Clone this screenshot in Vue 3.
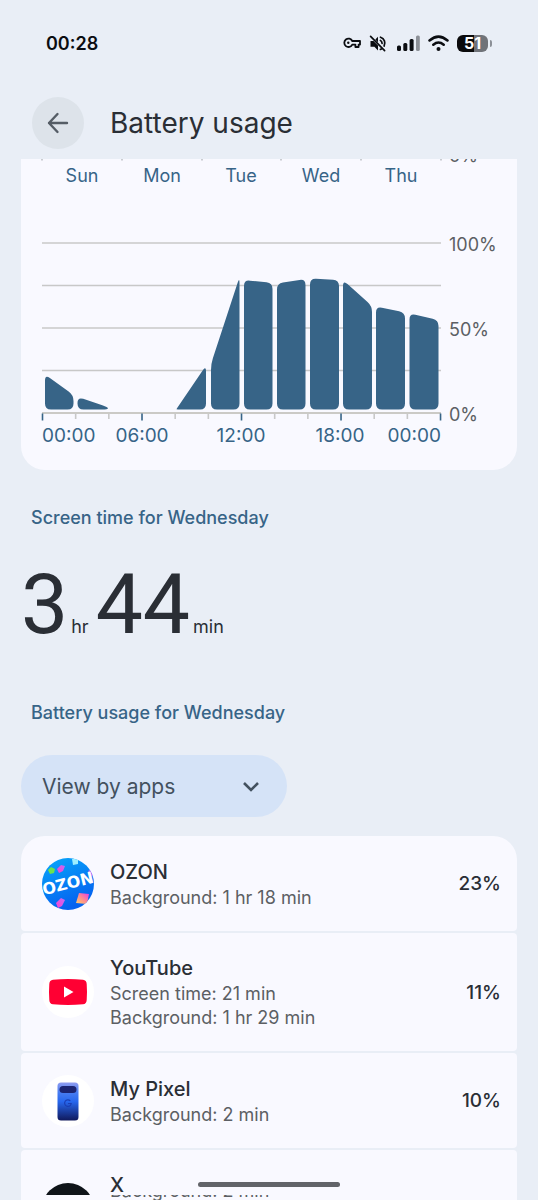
<script setup>
import { ref } from 'vue'

const view = ref('apps')

const days = [
  { name: 'Sun', x: 61 },
  { name: 'Mon', x: 141 },
  { name: 'Tue', x: 220 },
  { name: 'Wed', x: 300 },
  { name: 'Thu', x: 380 },
]
const dayTicks = [21, 101, 181, 260, 340, 420]
const grid = [84, 126.5, 169, 211.5]
const ticks = Array.from({ length: 13 }, (_, i) => ({
  x: 21.5 + i * 33.17,
  major: i % 3 === 0,
}))
const hours = [
  { t: '00:00', x: 21, a: 'start' },
  { t: '06:00', x: 121, a: 'middle' },
  { t: '12:00', x: 220, a: 'middle' },
  { t: '18:00', x: 319, a: 'middle' },
  { t: '00:00', x: 420, a: 'end' },
]
const levels = [
  { t: '100%', y: 92 },
  { t: '50%', y: 177 },
  { t: '0%', y: 262 },
]

const base = 250.5
const slots = [
  [24, 215.5, 52.5, 236],
  [56.5, 238, 87, 248],
  [155.5, 250, 185, 206.5],
  [190, 205, 218.5, 118],
  [223, 121, 251.5, 124],
  [256, 124.5, 284.5, 120],
  [289, 119.5, 318, 121],
  [322, 121, 351, 147],
  [355, 147.5, 384, 153.5],
  [388.5, 154.5, 417.5, 161],
]

function roundedShape(points, radius) {
  const n = points.length
  let d = ''
  points.forEach((p, i) => {
    const toward = (q) => {
      const len = Math.hypot(q[0] - p[0], q[1] - p[1]) || 1
      const k = Math.min(radius, len / 2) / len
      return `${(p[0] + (q[0] - p[0]) * k).toFixed(2)} ${(p[1] + (q[1] - p[1]) * k).toFixed(2)}`
    }
    d += `${i ? 'L' : 'M'}${toward(points[(i + n - 1) % n])}Q${p[0]} ${p[1]} ${toward(points[(i + 1) % n])}`
  })
  return d + 'Z'
}
const bars = slots.map(([l, tl, r, tr]) =>
  roundedShape([[l, base], [l, tl], [r, tr], [r, base]], 6)
)

const apps = [
  { id: 'ozon', name: 'OZON', lines: ['Background: 1 hr 18 min'], pct: '23%' },
  { id: 'youtube', name: 'YouTube', lines: ['Screen time: 21 min', 'Background: 1 hr 29 min'], pct: '11%' },
  { id: 'pixel', name: 'My Pixel', lines: ['Background: 2 min'], pct: '10%' },
]
</script>

<template>
  <div class="screen">
    <div class="status">
      <span class="clock">00:28</span>
      <div class="status-icons">
        <svg width="18" height="12" viewBox="0 0 18 12" fill="none" stroke="#0b0d11" stroke-width="1.8" stroke-linejoin="round">
          <path d="M9.3 4H17v3.6h-1.4V10h-3.2V7.6H9.3A4.2 4.2 0 1 1 9.3 4Z" />
          <circle cx="5.3" cy="5.8" r="1.2" fill="#0b0d11" stroke="none" />
        </svg>
        <svg class="mute" width="18" height="17" viewBox="0 0 18 17" fill="none" stroke="#0b0d11" stroke-width="1.7" stroke-linecap="round">
          <path d="M1.500 6h3L9 10.500v5L5.400 11.800H1.500Z" fill="#0b0d11" stroke="none" />
          <path d="M9 1.800v5.600L6.300 4.600Z" fill="#0b0d11" stroke="none" />
          <path d="M1.600 1.400 15.600 15.600" />
          <path d="M11.400 5.400q1.600 1 1.700 3M11.500 2.200c4 1.400 5.300 5.400 3.600 8.800M11.400 14.400l1-.4" />
        </svg>
        <svg class="signal" width="23" height="17" viewBox="0 0 23 17" fill="#0b0d11">
          <rect x="0" y="10.500" width="4" height="5.500" rx="1.500" />
          <rect x="6.300" y="8" width="4" height="8" rx="1.500" />
          <rect x="12.600" y="4" width="4" height="12" rx="1.500" />
          <rect x="19" y="0.500" width="3.800" height="15.500" rx="1.500" fill="#8c9097" />
        </svg>
        <svg class="wifi" width="21" height="17" viewBox="0 0 21 17" fill="none" stroke="#0b0d11" stroke-width="2.500" stroke-linecap="round">
          <path d="M1.500 5.500Q10.500-2.300 19.500 5.500M5.300 9.700q5.200-4.300 10.400 0" />
          <circle cx="10.500" cy="14" r="2" fill="#0b0d11" stroke="none" />
        </svg>
        <div class="battery"><span>51</span></div>
      </div>
    </div>

    <header class="bar">
      <button class="back" type="button" aria-label="Back">
        <svg width="22" height="22" viewBox="0 0 22 22" fill="none" stroke="#555d66" stroke-width="2.400" stroke-linecap="round" stroke-linejoin="round">
          <path d="M20 11H2M10.500 2 2 11l8.500 9" />
        </svg>
      </button>
      <h1>Battery usage</h1>
    </header>

    <main>
      <section class="chart">
        <svg viewBox="0 0 496 311" role="img" aria-label="Battery level on Wednesday">
          <path v-for="x in dayTicks" :key="x" :d="`M${x} 0v1.500`" stroke="#b9bcc2" stroke-width="1.500" />
          <text class="pct" x="428" y="3">0%</text>
          <text v-for="d in days" :key="d.name" class="day" :x="d.x" y="23">{{ d.name }}</text>
          <path v-for="y in grid" :key="y" :d="`M21 ${y}H420`" stroke="#c8c8c8" stroke-width="1.500" />
          <path d="M21 254H420" stroke="#cbcac6" stroke-width="2" />
          <path
            v-for="t in ticks"
            :key="t.x"
            :d="`M${t.x} 254.500v${t.major ? 7 : 5.500}`"
            :stroke="t.major ? '#376487' : '#c8c8c8'"
            stroke-width="1.600"
          />
          <path v-for="b in bars" :key="b" :d="b" fill="#376487" />
          <text v-for="h in hours" :key="h.x" class="hour" :x="h.x" y="283" :text-anchor="h.a">{{ h.t }}</text>
          <text v-for="l in levels" :key="l.t" class="pct" x="428" :y="l.y">{{ l.t }}</text>
        </svg>
      </section>

      <h2>Screen time for Wednesday</h2>
      <p class="time">
        <span class="big">3</span><span class="unit">hr</span><span class="big">44</span><span class="unit">min</span>
      </p>

      <h2 class="usage">Battery usage for Wednesday</h2>
      <div class="picker">
        <select v-model="view" aria-label="View by">
          <option value="apps">View by apps</option>
          <option value="systems">View by systems</option>
        </select>
        <svg width="18" height="12" viewBox="0 0 18 12" fill="none" stroke="#43515f" stroke-width="2.600">
          <path d="M2 2l7 7 7-7" />
        </svg>
      </div>

      <ul class="apps">
        <li v-for="a in apps" :key="a.id" class="app">
          <svg v-if="a.id === 'ozon'" class="icon" viewBox="0 0 52 52">
            <defs>
              <clipPath id="disc"><circle cx="26" cy="26" r="26" /></clipPath>
              <linearGradient id="sky" x1="0" y1="0" x2="0.400" y2="1">
                <stop offset="0" stop-color="#08a8fa" />
                <stop offset="1" stop-color="#0562f0" />
              </linearGradient>
              <linearGradient id="warm" x1="0" y1="1" x2="1" y2="0">
                <stop offset="0" stop-color="#ffd36a" />
                <stop offset="0.500" stop-color="#ff8a8f" />
                <stop offset="1" stop-color="#e73ce8" />
              </linearGradient>
              <linearGradient id="pink" x1="0" y1="1" x2="1" y2="0">
                <stop offset="0" stop-color="#ff3fd0" />
                <stop offset="1" stop-color="#c06cf5" />
              </linearGradient>
            </defs>
            <g clip-path="url(#disc)">
              <rect width="52" height="52" fill="url(#sky)" />
              <path d="M6 12l3-3 4 2-1 4-4 1Z" fill="#6be34e" />
              <path d="M15 11l4-4 4 1-2 5-4 2Z" fill="url(#pink)" />
              <path d="M30 1l6-2v7l-5 1Z" fill="#9defff" />
              <path d="M46 13l4-2 2 6-3 1Z" fill="#c36cf5" />
              <path d="M14 45l5-5 4 2-3 6-4 2Z" fill="url(#pink)" />
              <path d="M37 35l10 1-2 10-11-1Z" fill="url(#warm)" />
              <text class="ozon" x="26" y="31" text-anchor="middle" transform="rotate(-14 26 26)">OZON</text>
            </g>
          </svg>
          <svg v-else-if="a.id === 'youtube'" class="icon" viewBox="0 0 52 52">
            <circle cx="26" cy="26" r="26" fill="#fff" />
            <path d="M11 13.700Q26 12.300 41 13.700 44.500 14 44.700 18q.6 8 0 16-.2 4-3.700 4.300-15 1.400-30 0Q7.500 38 7.300 34q-.6-8 0-16 .2-4 3.700-4.300Z" fill="#ff0033" />
            <path d="M22 20.500v11l9.500-5.500Z" fill="#fff" />
          </svg>
          <svg v-else class="icon" viewBox="0 0 52 52">
            <defs>
              <linearGradient id="body" x1="0" y1="0" x2="0" y2="1">
                <stop offset="0" stop-color="#8f9cf0" />
                <stop offset="0.250" stop-color="#4a7ef2" />
                <stop offset="0.500" stop-color="#2767ee" />
                <stop offset="1" stop-color="#10195c" />
              </linearGradient>
            </defs>
            <circle cx="26" cy="26" r="26" fill="#fff" />
            <rect x="15.500" y="7.500" width="21" height="38" rx="3.500" fill="url(#body)" />
            <rect x="17.500" y="11" width="17" height="7" rx="3.500" fill="#1b2472" />
            <path d="M28.300 25.800a3.300 3.300 0 1 0 .9 2.700H26" fill="none" stroke="#1a3fb5" stroke-width="1.200" />
          </svg>
          <div class="info">
            <div class="name">{{ a.name }}</div>
            <div v-for="l in a.lines" :key="l" class="sub">{{ l }}</div>
          </div>
          <span class="share">{{ a.pct }}</span>
        </li>
        <li class="app peek">
          <svg class="x-icon" viewBox="0 0 52 12"><circle cx="26" cy="26" r="26" fill="#0f1419" /></svg>
          <div class="info">
            <div class="name">X</div>
            <div class="sub-clip"><div class="sub">Background: 2 min</div></div>
          </div>
        </li>
      </ul>
    </main>
    <div class="home"></div>
  </div>
</template>

<style>
body {
  background: #e9eef6;
}
</style>

<style scoped>
.screen {
  font-family: Inter, Roboto, "Liberation Sans", sans-serif;
  color: #2a2e35;
  background: #e9eef6;
}
.status {
  display: flex;
  justify-content: space-between;
  align-items: center;
  height: 86px;
  padding: 0 50px 0 46px;
}
.clock {
  font-size: 18px;
  font-weight: 600;
  color: #0b0d11;
}
.status-icons {
  display: flex;
  align-items: center;
}
.mute { margin-left: 8px; }
.signal { margin-left: 10px; }
.wifi { margin-left: 8px; }
.battery {
  position: relative;
  display: flex;
  align-items: center;
  justify-content: center;
  width: 31px;
  height: 17px;
  margin-left: 8px;
  border-radius: 6px;
  background: linear-gradient(90deg, #0b0b0c 54%, #707379 54%);
  color: #fff;
  font-size: 16px;
  font-weight: 700;
}
.battery::after {
  content: "";
  position: absolute;
  right: -4px;
  top: 5px;
  width: 2px;
  height: 7px;
  border-radius: 0 2px 2px 0;
  background: #8c9097;
}
.bar {
  display: flex;
  align-items: center;
  gap: 26px;
  height: 73px;
  padding: 0 32px;
}
.back {
  display: grid;
  place-items: center;
  width: 52px;
  height: 52px;
  padding: 0;
  border: 0;
  border-radius: 50%;
  background: #dde3ea;
}
h1 {
  margin: 0;
  font-size: 28px;
  font-weight: 400;
  line-height: 36px;
}
main {
  padding: 0 21px;
}
.chart {
  border-radius: 0 0 24px 24px;
  background: #f9f9ff;
}
.chart svg {
  display: block;
  width: 100%;
  overflow: hidden;
}
.chart text { font-size: 18px; }
.day { fill: #376487; text-anchor: middle; }
.chart .hour { fill: #376487; font-size: 19px; }
.pct { fill: #5c5f64; }
h2 {
  margin: 0;
  padding: 36px 10px 0;
  font-size: 18px;
  font-weight: 500;
  line-height: 24px;
  color: #376487;
}
.time {
  display: flex;
  align-items: baseline;
  margin: 0;
  padding-top: 25px;
  line-height: 100px;
}
.big {
  font-family: Roboto, sans-serif;
  font-size: 84px;
}
.unit {
  margin: 0 7px 0 3px;
  font-size: 18px;
}
.usage { padding-top: 24px; }
.picker {
  position: relative;
  width: 266px;
  margin-top: 30px;
}
select {
  display: block;
  appearance: none;
  width: 100%;
  height: 62px;
  padding: 0 21px;
  border: 0;
  border-radius: 31px;
  background: #d5e3f7;
  color: #43515f;
  font: 400 21px Inter, Roboto, sans-serif;
}
.picker svg {
  position: absolute;
  right: 27px;
  top: 26px;
  pointer-events: none;
}
.apps {
  display: flex;
  flex-direction: column;
  gap: 2px;
  margin: 0;
  padding: 19px 0 0;
  list-style: none;
}
.app {
  display: flex;
  align-items: center;
  gap: 16px;
  box-sizing: border-box;
  min-height: 95px;
  padding: 21px 16px 21px 21px;
  border-radius: 4px;
  background: #f9f9ff;
}
.app:first-child { border-radius: 24px 24px 4px 4px; }
.icon {
  flex: none;
  width: 52px;
  height: 52px;
}
.ozon {
  fill: #fff;
  font-family: "DejaVu Sans", sans-serif;
  font-size: 16px;
  font-weight: 700;
}
.info { flex: 1; }
.name {
  font-size: 20px;
  font-weight: 500;
  line-height: 28px;
}
.sub {
  font-size: 18px;
  line-height: 24px;
  color: #5c5f64;
}
.share {
  font-size: 19px;
  font-weight: 500;
}
.peek {
  min-height: 0;
  align-items: flex-start;
  padding-bottom: 0;
  border-radius: 4px 4px 0 0;
}
.x-icon {
  flex: none;
  width: 52px;
  height: 12px;
  margin-top: 12px;
}
.peek .name {
  height: 24px;
}
.sub-clip {
  display: flex;
  align-items: flex-end;
  height: 5px;
  overflow: hidden;
}
.sub-clip .sub {
  line-height: 18px;
}
.home {
  position: fixed;
  left: 50%;
  bottom: 13px;
  width: 142px;
  height: 5px;
  margin-left: -71px;
  border-radius: 3px;
  background: #626469;
}
</style>
